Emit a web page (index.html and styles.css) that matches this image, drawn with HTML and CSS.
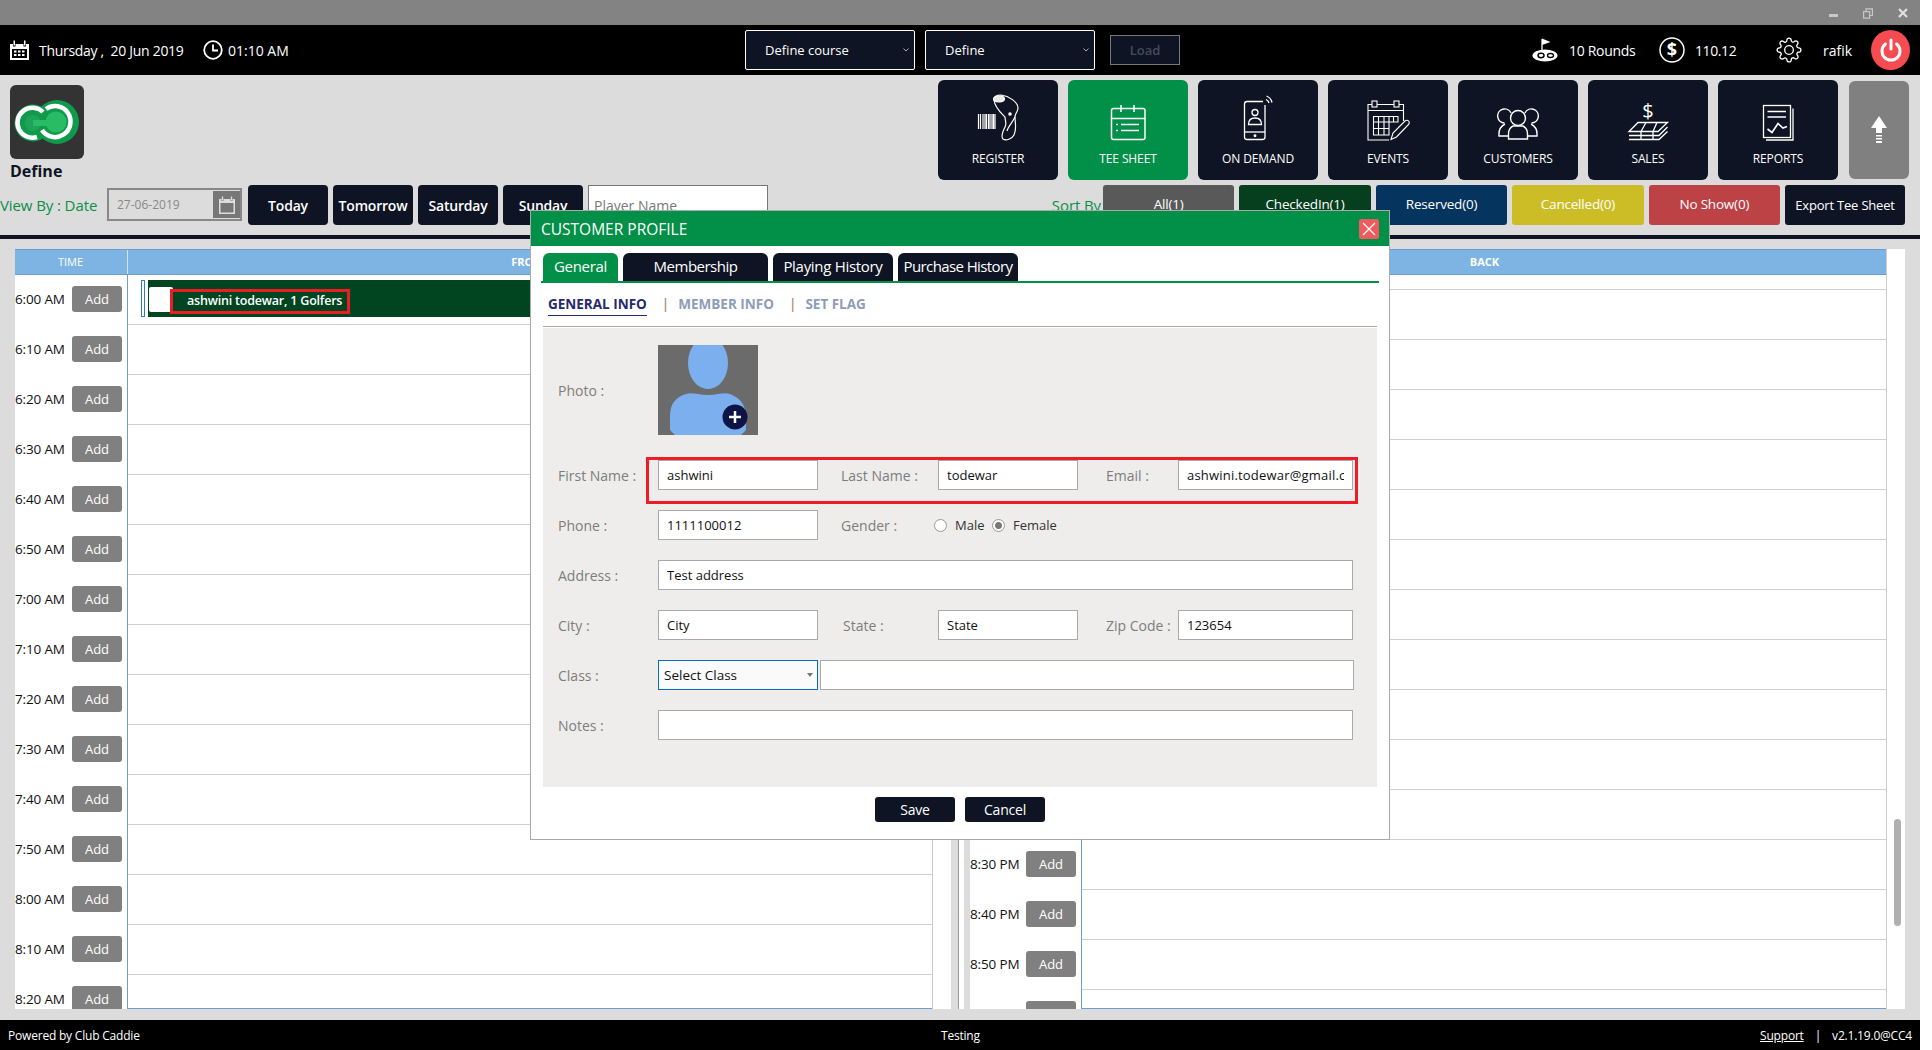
FILE: index.html
```html
<!DOCTYPE html>
<html lang="en">
<head>
    <meta charset="UTF-8">
    <meta name="viewport" content="width=device-width, initial-scale=1.0">
    <title>Tee Sheet</title>
    <link rel="stylesheet" href="styles.css">
</head>
<body>
<div class="app">

    <div class="titlebar">
        <svg class="win-btn" width="9" height="10" viewBox="0 0 9 10"><rect x="0" y="6" width="9" height="3" fill="#c8c8c8"/></svg>
        <svg class="win-btn" width="10" height="11" viewBox="0 0 10 11" fill="none" stroke="#c8c8c8" stroke-width="1.2"><rect x="0.6" y="3.6" width="6" height="6.5"/><path d="M3 3.5V0.8H9.4V7.5H7"/></svg>
        <svg class="win-btn" width="10" height="10" viewBox="0 0 10 10" stroke="#e0e0e0" stroke-width="2.2"><path d="M1 1L9 9M9 1L1 9"/></svg>
    </div>

    <div class="topbar">
        <div class="top-left">
            <svg width="19" height="20" viewBox="0 0 19 20" fill="#fff"><path d="M0 4H3V6.500H5.500V4H13.500V6.500H16V4H19V20H0ZM2 9V18H17V9Z"/><rect x="3.500" y="0.500" width="1.500" height="5"/><rect x="14" y="0.500" width="1.500" height="5"/><rect x="4" y="10.500" width="2.500" height="2"/><rect x="8" y="10.500" width="2.500" height="2"/><rect x="12" y="10.500" width="2.500" height="2"/><rect x="4" y="14" width="2.500" height="2"/><rect x="8" y="14" width="2.500" height="2"/><rect x="12" y="14" width="2.500" height="2"/></svg>
            <span class="today-text">Thursday ,&nbsp; 20 Jun 2019</span>
            <svg class="clock" width="20" height="20" viewBox="0 0 20 20" fill="none" stroke="#fff" stroke-width="1.800"><circle cx="10" cy="10" r="8.800"/><path d="M10 4.500V10.500H15"/></svg>
            <span>01:10 AM</span>
        </div>
        <div class="top-center">
            <div class="top-select">Define course <svg width="6" height="4" viewBox="0 0 6 4" fill="none" stroke="#aaa"><path d="M0.500 0.500L3 3L5.500 0.500"/></svg></div>
            <div class="top-select">Define <svg width="6" height="4" viewBox="0 0 6 4" fill="none" stroke="#aaa"><path d="M0.500 0.500L3 3L5.500 0.500"/></svg></div>
            <button class="load-btn">Load</button>
        </div>
        <div class="top-right">
            <svg width="26" height="24" viewBox="0 0 26 24"><path d="M10 1V15" stroke="#fff" stroke-width="1.300"/><path d="M10 0.500L18.500 4L10 7Z" fill="#fff"/><ellipse cx="13" cy="17.500" rx="12.500" ry="6" fill="#fff"/><ellipse cx="9" cy="17.500" rx="3" ry="2.200" fill="none" stroke="#000" stroke-width="1.500"/><ellipse cx="18.500" cy="17.500" rx="3" ry="2" fill="none" stroke="#000" stroke-width="1.300"/></svg>
            <span class="rounds-text">10 Rounds</span>
            <svg class="money-icon" width="26" height="26" viewBox="0 0 26 26"><circle cx="13" cy="13" r="12" fill="none" stroke="#fff" stroke-width="1.500"/><text x="13" y="19" text-anchor="middle" class="dollar">$</text></svg>
            <span class="money-text">110.12</span>
            <svg class="gear-icon" width="26" height="26" viewBox="0 0 24 24" fill="none" stroke="#fff" stroke-width="1.200"><circle cx="12" cy="12" r="4"/><path d="M19.400 15a1.650 1.650 0 0 0 .33 1.820l.06.06a2 2 0 0 1 0 2.830 2 2 0 0 1-2.830 0l-.06-.06a1.650 1.650 0 0 0-1.820-.33 1.650 1.650 0 0 0-1 1.510V21a2 2 0 0 1-2 2 2 2 0 0 1-2-2v-.09A1.650 1.650 0 0 0 9 19.400a1.650 1.650 0 0 0-1.820.33l-.06.06a2 2 0 0 1-2.830 0 2 2 0 0 1 0-2.830l.06-.06a1.650 1.650 0 0 0 .33-1.820 1.650 1.650 0 0 0-1.510-1H3a2 2 0 0 1-2-2 2 2 0 0 1 2-2h.09A1.650 1.650 0 0 0 4.600 9a1.650 1.650 0 0 0-.33-1.820l-.06-.06a2 2 0 0 1 0-2.830 2 2 0 0 1 2.830 0l.06.06a1.650 1.650 0 0 0 1.820.33H9a1.650 1.650 0 0 0 1-1.510V3a2 2 0 0 1 2-2 2 2 0 0 1 2 2v.09a1.650 1.650 0 0 0 1 1.510 1.650 1.650 0 0 0 1.820-.33l.06-.06a2 2 0 0 1 2.830 0 2 2 0 0 1 0 2.830l-.06.06a1.650 1.650 0 0 0-.33 1.820V9a1.650 1.650 0 0 0 1.510 1H21a2 2 0 0 1 2 2 2 2 0 0 1-2 2h-.09a1.650 1.650 0 0 0-1.510 1z"/></svg>
            <span class="user-text">rafik</span>
            <div class="power-btn">
                <svg width="22" height="24" viewBox="0 0 22 24" fill="none" stroke="#fff" stroke-width="3" stroke-linecap="round"><path d="M11 2V11"/><path d="M5.500 6A9 9 0 1 0 16.500 6"/></svg>
            </div>
        </div>
    </div>

    <div class="main">
        <div class="toolbar">
            <div class="brand">
                <div class="brand-logo">
                    <svg width="74" height="74" viewBox="0 0 74 74" fill="none"><circle cx="23" cy="38" r="18.500" fill="#0f9a4c"/><circle cx="47" cy="37" r="22" fill="#0f9a4c"/><circle cx="23" cy="38" r="8" fill="#1fa35a"/><path d="M23 38H46" stroke="#2abb65" stroke-width="6"/><circle cx="46" cy="37" r="10.500" fill="#2abb65"/><path d="M33 27A15 15 0 1 0 27 52" stroke="#fff" stroke-width="4.500"/><path d="M36 24A15.500 15.500 0 1 1 32 45" stroke="#fff" stroke-width="4.500"/></svg>
                </div>
                <div class="brand-name">Define</div>
            </div>
            <div class="tiles">
                <div class="tile">
                    <svg width="60" height="50" viewBox="0 0 60 50" fill="none" stroke="#fff" stroke-width="1.200"><path d="M26 6C26 3 29 2 33 2C41 3 50 9 50 15C50 19 47 20 47 24C47 30 49 36 46 42C44 46 38 48 35 46C33 44 35 38 37 34C39 30 37 28 37 24C34 21 26 14 26 6Z"/><ellipse cx="31" cy="6" rx="5.500" ry="2.800" fill="#e8e8e8"/><circle cx="42" cy="21" r="1.200" fill="#fff"/><path d="M47 24C44 30 40 34 39 38"/><path d="M10.500 21V36M12.500 21V36M15 21V36M17 21V36M18.500 21V36M20.500 21V36M22 21V36M24 21V36M25.500 21V36M27 21V36"/></svg>
                    <span>REGISTER</span>
                </div>
                <div class="tile tile-active">
                    <svg width="60" height="50" viewBox="0 0 60 50" fill="none" stroke="#fff" stroke-width="1.500"><rect x="13.500" y="15.500" width="33.500" height="31" rx="2"/><path d="M14 25.500H47M23 12V19M36 12V19"/><path d="M23 31.500H41M23 37.500H41M18 31.500H20M18 37.500H20"/></svg>
                    <span>TEE SHEET</span>
                </div>
                <div class="tile">
                    <svg width="60" height="50" viewBox="0 0 60 50" fill="none" stroke="#fff" stroke-width="1.300"><path d="M35 8.500H19C17 8.500 16.500 9.500 16.500 11V44C16.500 46 17.500 46.500 19 46.500H34.500C36 46.500 37 46 37 44V12"/><path d="M17 39H37"/><circle cx="27" cy="19.500" r="3"/><path d="M20.500 31.500C20.500 26 24 25 27 25C30 25 33.500 26 33.500 31.500Z"/><circle cx="27" cy="42.800" r="0.800" fill="#fff"/><path d="M38 6.500A5 5 0 0 1 41 10M38.500 3A9 9 0 0 1 44 9.500"/></svg>
                    <span>ON DEMAND</span>
                </div>
                <div class="tile">
                    <svg width="60" height="50" viewBox="0 0 60 50" fill="none" stroke="#fff" stroke-width="1.100"><path d="M31 47H10V11.500H14M19 11.500H36M41 11.500H45.500V28"/><path d="M10 17.500H45.500"/><rect x="14" y="8" width="5" height="6"/><rect x="36" y="8" width="5" height="6"/><path d="M15.500 23.500H40V29H15.500ZM15.500 29H31V42H15.500ZM20.500 23.500V42M26 23.500V42M31 23.500V29M35.500 23.500V29M15.500 35.500H31"/><path d="M33 46.500L35 40L47 28C48 27 50 27 51 28.500C51.500 29.500 51.500 30.500 50.500 31.500L38.500 44Z"/></svg>
                    <span>EVENTS</span>
                </div>
                <div class="tile">
                    <svg width="60" height="50" viewBox="0 0 60 50" fill="none" stroke="#fff" stroke-width="1.400"><circle cx="30" cy="25" r="7.500"/><path d="M23 20A7 7 0 1 0 16.500 30M37 20A7 7 0 1 1 43.500 30"/><path d="M20.500 46V41C20.500 36 24 33.500 25 33H35C36 33.500 39.500 36 39.500 41V46Z"/><path d="M20 43H11C10.500 37 13 33 17 31M40 43H49C49.500 37 47 33 43 31"/></svg>
                    <span>CUSTOMERS</span>
                </div>
                <div class="tile">
                    <svg width="60" height="50" viewBox="0 0 60 50" fill="none" stroke="#fff" stroke-width="1.300"><text x="30" y="25" text-anchor="middle" class="sales-dollar">$</text><path d="M20 29.500H49.500L40 38.500H11ZM23 38.500L28 29.500M35 38.500L39 29.500"/><path d="M11 42.500H23V38.500M23 42.500H35V38.500M35 42.500H41L49.500 34M11 46.500H41L49.500 38.500M23 42.500V46.500M35 42.500V46.500"/></svg>
                    <span>SALES</span>
                </div>
                <div class="tile">
                    <svg width="60" height="50" viewBox="0 0 60 50" fill="none" stroke="#fff" stroke-width="1.300"><rect x="15.500" y="12.500" width="27" height="32"/><path d="M45 15.500V47H18"/><path d="M19.500 18.500H38M19.500 24H38"/><path d="M19.500 36L24 39.500L30 30.500L35 35L39 33.500" stroke-width="1.600"/></svg>
                    <span>REPORTS</span>
                </div>
                <div class="tile-up">
                    <svg width="16" height="28" viewBox="0 0 16 28" fill="#fff"><path d="M8 0L16 12H11V17H5V12H0Z"/><rect x="5" y="19" width="6" height="1.500"/><rect x="5" y="22" width="6" height="1.500"/><rect x="5" y="25" width="6" height="2"/></svg>
                </div>
            </div>
        </div>

        <div class="filters">
            <span class="green-label view-label">View By : Date</span>
            <div class="date-box">
                <span>27-06-2019</span>
                <div class="date-btn">
                    <svg width="16" height="18" viewBox="0 0 16 18" fill="#ddd"><path d="M0 3H2.500V5H4.500V3H11.500V5H13.500V3H16V18H0ZM1.500 7V16.500H14.500V7Z"/><rect x="2.800" y="0.500" width="1.400" height="4"/><rect x="11.800" y="0.500" width="1.400" height="4"/></svg>
                </div>
            </div>
            <button class="day-btn">Today</button>
            <button class="day-btn">Tomorrow</button>
            <button class="day-btn">Saturday</button>
            <button class="day-btn">Sunday</button>
            <input class="player-input" type="text" placeholder="Player Name">
            <div class="sort-box">
                <span class="green-label">Sort By</span>
                <div class="sort-btns">
                    <button class="sort-btn sort-all">All(1)</button>
                    <button class="sort-btn sort-checked">CheckedIn(1)</button>
                    <button class="sort-btn sort-reserved">Reserved(0)</button>
                    <button class="sort-btn sort-cancelled">Cancelled(0)</button>
                    <button class="sort-btn sort-noshow">No Show(0)</button>
                    <button class="export-btn">Export Tee Sheet</button>
                </div>
            </div>
        </div>

        <div class="rule"></div>

        <div class="sheet">
            <div class="course front">
                <div class="course-head">
                    <div class="head-time">TIME</div>
                    <div class="head-name">FRONT</div>
                </div>
                <div class="course-body">
                    <div class="times">
                        <div class="time-row"><span>6:00 AM</span><button class="add-btn">Add</button></div>
                        <div class="time-row"><span>6:10 AM</span><button class="add-btn">Add</button></div>
                        <div class="time-row"><span>6:20 AM</span><button class="add-btn">Add</button></div>
                        <div class="time-row"><span>6:30 AM</span><button class="add-btn">Add</button></div>
                        <div class="time-row"><span>6:40 AM</span><button class="add-btn">Add</button></div>
                        <div class="time-row"><span>6:50 AM</span><button class="add-btn">Add</button></div>
                        <div class="time-row"><span>7:00 AM</span><button class="add-btn">Add</button></div>
                        <div class="time-row"><span>7:10 AM</span><button class="add-btn">Add</button></div>
                        <div class="time-row"><span>7:20 AM</span><button class="add-btn">Add</button></div>
                        <div class="time-row"><span>7:30 AM</span><button class="add-btn">Add</button></div>
                        <div class="time-row"><span>7:40 AM</span><button class="add-btn">Add</button></div>
                        <div class="time-row"><span>7:50 AM</span><button class="add-btn">Add</button></div>
                        <div class="time-row"><span>8:00 AM</span><button class="add-btn">Add</button></div>
                        <div class="time-row"><span>8:10 AM</span><button class="add-btn">Add</button></div>
                        <div class="time-row"><span>8:20 AM</span><button class="add-btn">Add</button></div>
                    </div>
                    <div class="slots">
                        <div class="booking">
                            <div class="booking-mark"></div>
                            <div class="booking-bar">
                                <div class="booking-check"></div>
                                <div class="booking-name">ashwini todewar, 1 Golfers</div>
                            </div>
                        </div>
                    </div>
                </div>
            </div>
            <div class="divider"></div>
            <div class="course back">
                <div class="course-head">
                    <div class="head-time"></div>
                    <div class="head-name">BACK</div>
                </div>
                <div class="course-body">
                    <div class="times times-back">
                        <div class="time-row"><span>8:30 PM</span><button class="add-btn">Add</button></div>
                        <div class="time-row"><span>8:40 PM</span><button class="add-btn">Add</button></div>
                        <div class="time-row"><span>8:50 PM</span><button class="add-btn">Add</button></div>
                        <div class="time-row"><span></span><button class="add-btn"></button></div>
                    </div>
                    <div class="slots slots-back"></div>
                </div>
            </div>
            <div class="scroll-rail"><div class="scroll-thumb"></div></div>
        </div>
    </div>

    <div class="footer">
        <span class="footer-left">Powered by Club Caddie</span>
        <span class="footer-mid">Testing</span>
        <span class="footer-right"><a href="#">Support</a><i>|</i>v2.1.19.0@CC4</span>
    </div>

    <!-- customer popup -->
    <div class="modal">
        <div class="modal-head">
            <span>CUSTOMER PROFILE</span>
            <div class="modal-close">
                <svg width="14" height="14" viewBox="0 0 14 14" stroke="#fff" stroke-width="1.300"><path d="M1 1L13 13M13 1L1 13"/></svg>
            </div>
        </div>
        <div class="tabs">
            <div class="tab tab-on">General</div>
            <div class="tab tab-member">Membership</div>
            <div class="tab tab-history">Playing History</div>
            <div class="tab tab-history tab-purchase">Purchase History</div>
        </div>
        <div class="subtabs">
            <span class="subtab subtab-on">GENERAL INFO</span>
            <i class="pipe">|</i>
            <span class="subtab">MEMBER INFO</span>
            <i class="pipe">|</i>
            <span class="subtab">SET FLAG</span>
        </div>
        <div class="panel">
            <div class="highlight"></div>
            <div class="form">
                <label class="form-label photo-label">Photo :</label>
                <div class="photo-cell">
                    <svg width="100" height="90" viewBox="0 0 100 90"><rect width="100" height="90" fill="#6b6b6b"/><ellipse cx="50" cy="18" rx="20" ry="26" fill="#7cafee"/><path d="M17 90L12 85V72C12 58 18 52 28 49C34 47 40 50 50 50C60 50 66 47 72 49C82 53 88 60 88 72V85L83 90Z" fill="#7cafee"/><circle cx="77" cy="72" r="12.500" fill="#0e1546"/><path d="M71 72H83M77 66V78" stroke="#fff" stroke-width="2.500"/></svg>
                </div>

                <label class="form-label">First Name :</label>
                <input class="field" type="text" value="ashwini">
                <label class="form-label col-mid">Last Name :</label>
                <input class="field" type="text" value="todewar">
                <label class="form-label col-end">Email :</label>
                <input class="field field-email" type="text" value="ashwini.todewar@gmail.com">

                <label class="form-label">Phone :</label>
                <input class="field" type="text" value="1111100012">
                <label class="form-label col-mid">Gender :</label>
                <div class="radios">
                    <input type="radio" name="gender"><span>Male</span>
                    <input type="radio" name="gender" checked><span>Female</span>
                </div>

                <label class="form-label">Address :</label>
                <input class="field field-wide" type="text" value="Test address">

                <label class="form-label">City :</label>
                <input class="field" type="text" value="City">
                <label class="form-label col-state">State :</label>
                <input class="field" type="text" value="State">
                <label class="form-label col-end">Zip Code :</label>
                <input class="field" type="text" value="123654">

                <label class="form-label">Class :</label>
                <div class="class-row">
                    <div class="class-select">Select Class<em></em></div>
                    <input class="field" type="text">
                </div>

                <label class="form-label">Notes :</label>
                <input class="field field-wide" type="text">
            </div>
        </div>
        <div class="modal-actions">
            <button class="action-btn">Save</button>
            <button class="action-btn">Cancel</button>
        </div>
    </div>

</div>
</body>
</html>
```

FILE: styles.css
```css
* {
    box-sizing: border-box;
}
body {
    margin: 0;
    background: #fff;
    font-family: "Open Sans", "Noto Sans", sans-serif;
    font-size: 14px;
    overflow: hidden;
}
button {
    font-family: inherit;
    border: none;
    cursor: pointer;
}
.app {
    position: relative;
    width: 1920px;
    height: 1050px;
    display: flex;
    flex-direction: column;
    background: #dcdcdc;
}

/* title and top bar */
.titlebar {
    height: 25px;
    background: #838383;
    display: flex;
    justify-content: flex-end;
    align-items: flex-start;
    padding: 8px 12px 0 0;
}
.win-btn {
    margin-left: 25px;
}
.topbar {
    height: 50px;
    background: #000;
    color: #fff;
    display: flex;
    align-items: center;
}
.top-left {
    width: 745px;
    padding-left: 10px;
    display: flex;
    align-items: center;
}
.today-text {
    margin-left: 10px;
    width: 164px;
    white-space: nowrap;
    letter-spacing: -0.3px;
}
.clock {
    margin-right: 5px;
}
.top-center {
    display: flex;
    align-items: center;
}
.top-select {
    width: 170px;
    height: 40px;
    margin-right: 10px;
    padding: 0 5px 0 19px;
    background: #0e1423;
    border: 1px solid #fff;
    border-radius: 2px;
    font-size: 13px;
    display: flex;
    align-items: center;
    justify-content: space-between;
}
.load-btn {
    width: 70px;
    height: 30px;
    margin-left: 5px;
    background: #0e1423;
    border: 1px solid #777;
    color: #454b5c;
    font-size: 13px;
    font-weight: 600;
}
.top-right {
    margin-left: auto;
    padding-right: 10px;
    display: flex;
    align-items: center;
    white-space: nowrap;
}
.rounds-text {
    width: 65px;
    margin-left: 11px;
    letter-spacing: -0.3px;
}
.money-icon {
    margin-left: 25px;
}
.dollar {
    font-size: 18px;
    font-weight: 700;
    fill: #fff;
}
.sales-dollar {
    font-size: 20px;
    font-weight: 400;
    fill: #fff;
    stroke: none;
}
.money-text {
    width: 40px;
    margin-left: 10px;
    letter-spacing: -0.4px;
}
.gear-icon {
    margin-left: 41px;
}
.user-text {
    width: 27px;
    margin-left: 21px;
}
.power-btn {
    width: 39px;
    height: 40px;
    margin-left: 21px;
    border-radius: 50%;
    background: #f44c50;
    display: flex;
    align-items: center;
    justify-content: center;
}

/* logo and menu tiles */
.main {
    flex: 1;
    display: flex;
    flex-direction: column;
    min-height: 0;
}
.toolbar {
    height: 110px;
    display: flex;
    justify-content: space-between;
}
.brand {
    padding: 10px 0 0 10px;
}
.brand-logo {
    width: 74px;
    height: 74px;
    background: #333;
    border-radius: 6px;
}
.brand-logo svg {
    display: block;
}
.brand-name {
    margin-top: 1px;
    font-size: 16px;
    line-height: 22px;
    font-weight: 700;
    color: #0e1423;
}
.tiles {
    padding: 5px 11px 0 0;
    display: flex;
    align-items: flex-start;
    gap: 10px;
}
.tile {
    width: 120px;
    height: 100px;
    padding-top: 13px;
    background: #0e1423;
    border-radius: 6px;
    color: #fff;
    font-size: 12px;
    line-height: 16px;
    text-align: center;
}
.tile svg {
    display: block;
    margin: 0 auto;
}
.tile span {
    display: block;
    margin-top: 8px;
    letter-spacing: -0.1px;
}
.tile-active {
    background: #028f47;
}
.tile-up {
    width: 60px;
    height: 98px;
    margin: 1px 0 0 1px;
    background: #808080;
    border-radius: 6px;
    display: flex;
    align-items: center;
    justify-content: center;
}

/* filter row */
.filters {
    height: 40px;
    display: flex;
    align-items: stretch;
}
.green-label {
    color: #0a8f47;
    font-size: 15px;
    white-space: nowrap;
    align-self: center;
    letter-spacing: -0.1px;
}
.view-label {
    width: 107px;
}
.date-box {
    width: 135px;
    height: 33px;
    margin: 3px 6px 0 0;
    padding: 0 0 0 8px;
    border: 2px solid #888;
    display: flex;
    align-items: center;
    justify-content: space-between;
    color: #888;
    font-size: 12px;
}
.date-btn {
    width: 27px;
    height: 27px;
    background: #777;
    display: flex;
    align-items: center;
    justify-content: center;
}
.day-btn {
    width: 80px;
    margin-right: 5px;
    padding: 0;
    background: #0e1423;
    border-radius: 4px;
    color: #fff;
    font-size: 14px;
    font-weight: 600;
    letter-spacing: -0.2px;
}
.player-input {
    width: 180px;
    padding: 0 5px;
    border: 1px solid #777;
    background: #fff;
    font-family: inherit;
    font-size: 14px;
}
.player-input::placeholder {
    color: #777;
    opacity: 1;
}
.sort-box {
    margin-left: auto;
    padding-right: 15px;
    display: flex;
    align-items: stretch;
    gap: 2px;
}
.sort-btns {
    width: 802px;
    display: flex;
    gap: 5px;
}
.sort-btn {
    flex: 1;
    padding: 0 0 2px;
    border-radius: 3px;
    color: #fff;
    font-size: 13.500px;
    letter-spacing: -0.2px;
}
.sort-all {
    background: #595959;
}
.sort-checked {
    background: #053f1e;
}
.sort-reserved {
    background: #05355f;
}
.sort-cancelled {
    background: #ccbd26;
}
.sort-noshow {
    background: #bc4245;
}
.export-btn {
    width: 120px;
    padding: 0;
    background: #0e1423;
    border-radius: 3px;
    color: #fff;
    font-size: 13px;
    letter-spacing: -0.2px;
}
.rule {
    height: 4px;
    margin-top: 10px;
    background: #0e1423;
}

/* tee sheet columns */
.sheet {
    height: 760px;
    margin: 10px 15px 0;
    display: flex;
}
.course {
    display: flex;
    flex-direction: column;
    background: #fff;
}
.front {
    width: 918px;
    border-right: 1px solid #ccc;
}
.back {
    width: 916px;
}
.divider {
    width: 37px;
    border-left: 18px solid #fff;
    border-right: 6px solid #dcdcdc;
    background: linear-gradient(90deg, #dcdcdc 0 7px, #999 7px 8px, #fff 8px);
}
.course-head {
    height: 26px;
    display: flex;
    background: #7eb4e3;
    border-top: 1px solid #6a9fd0;
    border-bottom: 1px solid #6a9fd0;
    color: #fff;
    font-size: 11px;
    line-height: 24px;
    text-align: center;
}
.head-time {
    width: 113px;
    padding-right: 1px;
    border-right: 1px solid #d4e4f2;
}
.head-name {
    flex: 1;
    font-weight: 700;
}
.course-body {
    flex: 1;
    min-height: 0;
    display: flex;
}
.times {
    width: 112px;
    overflow: hidden;
}
.times-back {
    width: 111px;
}
.times-back .time-row:first-child {
    margin-top: 565px;
}
.time-row {
    height: 50px;
    padding-bottom: 2px;
    display: flex;
    align-items: center;
    font-size: 13.500px;
    letter-spacing: -0.15px;
    color: #111;
    white-space: nowrap;
}
.time-row span {
    width: 57px;
}
.times-back .time-row span {
    width: 56px;
}
.add-btn {
    width: 50px;
    height: 26px;
    padding: 0;
    background: #808080;
    border-radius: 3px;
    color: #fff;
    font-size: 13px;
    font-weight: 500;
}
.slots {
    flex: 1;
    padding: 5px 0 0 13px;
    border-left: 1px solid #6b9fcf;
    border-bottom: 1px solid #6b9fcf;
    background: linear-gradient(#fff 49px, #cfcfcf 49px) 0 0 / 100% 50px;
}
.slots-back {
    background-position: 0 -35px;
}
.booking {
    height: 37px;
    display: flex;
    gap: 3px;
}
.booking-mark {
    width: 4px;
    background: #fff;
    border: 1px solid #2a7fc0;
}
.booking-bar {
    flex: 1;
    padding: 7px 0 0 1px;
    background: #004420;
    display: flex;
    align-items: flex-start;
}
.booking-check {
    width: 24px;
    height: 25px;
    background: #fff;
    border-radius: 2px;
}
.booking-name {
    width: 180px;
    height: 25px;
    margin: 2px 0 0 -3px;
    padding-left: 14px;
    border: 3px solid #ee1c25;
    color: #fff;
    font-size: 12.500px;
    line-height: 18px;
    font-weight: 600;
    letter-spacing: -0.2px;
    white-space: nowrap;
}
.scroll-rail {
    flex: 1;
    background: #fff;
    padding: 570px 0 0 7px;
    border-left: 1px solid #ccc;
}
.scroll-thumb {
    width: 7px;
    height: 107px;
    border-radius: 4px;
    background: #b0b0b0;
}

/* footer */
.footer {
    height: 30px;
    margin-top: 11px;
    padding: 0 8px;
    background: #000;
    color: #fff;
    font-size: 12px;
    letter-spacing: -0.2px;
    display: flex;
    align-items: center;
}
.footer-left {
    width: 933px;
}
.footer-right {
    margin-left: auto;
}
.footer-right a {
    color: #fff;
}
.footer-right i {
    margin: 0 11px;
    font-style: normal;
}

/* customer popup */
.modal {
    position: absolute;
    left: 530px;
    top: 210px;
    width: 860px;
    height: 630px;
    background: #fff;
    border: 1px solid #aaa;
}
.modal-head {
    height: 35px;
    padding: 0 10px;
    background: #028f47;
    color: #fff;
    font-size: 15.500px;
    display: flex;
    align-items: center;
    justify-content: space-between;
}
.modal-close {
    width: 20px;
    height: 20px;
    background: #ef5a5e;
    border-radius: 2px;
    display: flex;
    align-items: center;
    justify-content: center;
}
.tabs {
    height: 30px;
    margin: 7px 10px 0;
    padding-left: 2px;
    border-bottom: 2px solid #028f47;
    display: flex;
    gap: 5px;
}
.tab {
    height: 28px;
    background: #0e1423;
    border-radius: 6px 6px 0 0;
    color: #fff;
    font-size: 15px;
    line-height: 27px;
    text-align: center;
    white-space: nowrap;
    letter-spacing: -0.3px;
}
.tab-on {
    width: 75px;
    background: #028f47;
}
.tab-member {
    width: 145px;
    letter-spacing: -0.5px;
}
.tab-history {
    width: 120px;
}
.tab-purchase {
    letter-spacing: -0.6px;
}
.subtabs {
    height: 44px;
    margin: 0 12px;
    padding: 11px 0 0 5px;
    border-bottom: 1px solid #aaa;
    display: flex;
    align-items: flex-start;
    font-size: 13.500px;
    font-weight: 700;
    color: #8d9db8;
    line-height: 20px;
}
.subtab-on {
    height: 22px;
    color: #252a6e;
    border-bottom: 1px solid #252a6e;
}
.pipe {
    margin: 0 9px 0 15px;
    font-style: normal;
    font-weight: 600;
    color: #a08a70;
}
.panel {
    position: relative;
    height: 459px;
    margin: 1px 12px 0;
    padding: 17px 0 0 15px;
    background: #eeedeb;
}
.highlight {
    position: absolute;
    left: 103px;
    top: 129px;
    width: 712px;
    height: 47px;
    border: 3px solid #ee1c25;
}
.form {
    display: grid;
    grid-template-columns: 100px 160px 120px 140px 100px 175px;
    grid-template-rows: 95px;
    grid-auto-rows: 30px;
    row-gap: 20px;
    align-items: center;
}
.form-label {
    color: #7d7d7d;
    font-size: 14px;
    white-space: nowrap;
}
.photo-label {
    margin-bottom: 5px;
}
.col-mid {
    padding-left: 23px;
}
.col-state {
    padding-left: 25px;
}
.col-end {
    padding-left: 28px;
}
.photo-cell {
    grid-column: 2 / -1;
    height: 90px;
    align-self: start;
}
.photo-cell svg {
    display: block;
}
.field {
    width: 100%;
    height: 30px;
    padding: 0 8px;
    background: #fff;
    border: 1px solid #aaa;
    font-family: inherit;
    font-size: 13px;
    color: #111;
    outline: none;
}
.field-email {
    letter-spacing: 0.2px;
}
.field-wide {
    grid-column: 2 / -1;
}
.radios {
    grid-column: 4 / -1;
    display: flex;
    align-items: center;
    font-size: 13px;
    color: #333;
}
.radios input {
    appearance: none;
    width: 13px;
    height: 13px;
    margin: 0 8px 0 -4px;
    border: 1px solid #999;
    border-radius: 50%;
    background: #fff;
}
.radios input:checked {
    background: radial-gradient(#777 0 3px, #fff 4px);
}
.radios span {
    width: 41px;
}
.class-row {
    grid-column: 2 / -1;
    display: flex;
    gap: 2px;
    margin-right: -1px;
}
.class-select {
    flex: none;
    position: relative;
    width: 160px;
    height: 30px;
    padding-left: 5px;
    background: #fafafa;
    border: 1px solid #0a6ebd;
    font-size: 13.500px;
    line-height: 28px;
    color: #111;
}
.class-select em {
    position: absolute;
    right: 4px;
    top: 12px;
    border: 3px solid transparent;
    border-top: 4px solid #777;
}
.modal-actions {
    margin-top: 10px;
    display: flex;
    justify-content: center;
    gap: 10px;
}
.action-btn {
    width: 80px;
    height: 25px;
    padding: 0;
    background: #0e1423;
    border-radius: 3px;
    color: #fff;
    font-size: 14px;
    letter-spacing: -0.2px;
}
```
